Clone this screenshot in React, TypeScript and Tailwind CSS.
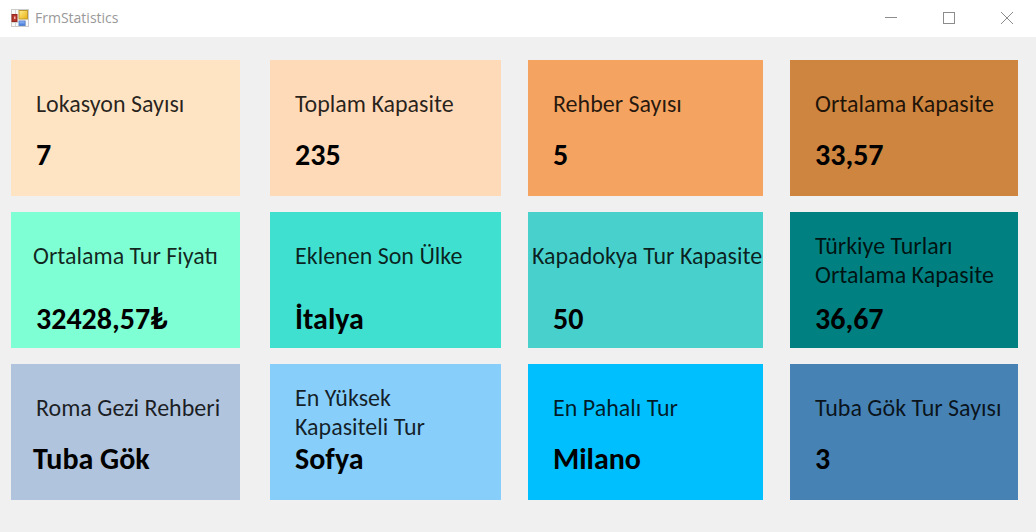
type Stat = {
  label: string;
  value: string;
  color: string;
  twoLines?: boolean;
  labelInset?: string;
  valueInset?: string;
  lowValue?: boolean;
};

const stats: Stat[] = [
  { label: "Lokasyon Sayısı", value: "7", color: "bg-[#ffe4c4]" },
  { label: "Toplam Kapasite", value: "235", color: "bg-[#ffdab9]" },
  { label: "Rehber Sayısı", value: "5", color: "bg-[#f4a460]" },
  { label: "Ortalama Kapasite", value: "33,57", color: "bg-[#cd853f]" },
  { label: "Ortalama Tur Fiyatı", value: "32428,57₺", color: "bg-[#7fffd4]", labelInset: "pl-[22px]", lowValue: true },
  { label: "Eklenen Son Ülke", value: "İtalya", color: "bg-[#40e0d0]", lowValue: true },
  { label: "Kapadokya Tur Kapasitesi", value: "50", color: "bg-[#48d1cc]", labelInset: "pl-1", lowValue: true },
  { label: "Türkiye Turları\nOrtalama Kapasite", value: "36,67", color: "bg-[#008080]", twoLines: true, lowValue: true },
  { label: "Roma Gezi Rehberi", value: "Tuba Gök", color: "bg-[#b0c4de]", valueInset: "pl-[22px]" },
  { label: "En Yüksek\nKapasiteli Tur", value: "Sofya", color: "bg-[#87cefa]", twoLines: true },
  { label: "En Pahalı Tur", value: "Milano", color: "bg-[#00bfff]" },
  { label: "Tuba Gök Tur Sayısı", value: "3", color: "bg-[#4682b4]" },
];

function StatCard({ label, value, color, twoLines, labelInset, valueInset, lowValue }: Stat) {
  return (
    <div
      className={`flex min-h-[136px] min-w-0 flex-col overflow-hidden ${color} ${twoLines ? "pt-[19px]" : "pt-[29px]"} ${lowValue ? "pb-[11px]" : "pb-[23px]"}`}
    >
      <dt className={`whitespace-pre text-[24px] leading-[29px] text-black/85 ${labelInset ?? "pl-[25px]"}`}>{label}</dt>
      <dd className={`mt-auto whitespace-nowrap text-[30px] leading-9 font-bold text-black ${valueInset ?? "pl-[25px]"}`}>{value}</dd>
    </div>
  );
}

function AppIcon() {
  return (
    <svg width="18" height="18" viewBox="0 0 18 18" aria-hidden="true">
      <defs>
        <linearGradient id="gold" x1="0" y1="0" x2="1" y2="1">
          <stop offset="0" stopColor="#ffee8c" />
          <stop offset="1" stopColor="#e8b010" />
        </linearGradient>
        <linearGradient id="blue" x1="0" y1="0" x2="0" y2="1">
          <stop offset="0" stopColor="#9cc4ff" />
          <stop offset="1" stopColor="#3a6fd8" />
        </linearGradient>
      </defs>
      <rect x="0.5" y="0.5" width="17" height="17" fill="#f8f8f8" stroke="#cccccc" />
      <path d="M4.5 1v16M1 13.5h6M14.5 12v5" stroke="#d4d4d4" />
      <rect x="8" y="1.5" width="8.5" height="8.5" fill="url(#gold)" stroke="#c09a30" />
      <rect x="1" y="5.5" width="5" height="7" fill="#b8382c" stroke="#93261e" />
      <rect x="3" y="7.5" width="1.5" height="2.5" fill="#f0b0a8" />
      <rect x="8" y="12" width="6" height="4.5" fill="url(#blue)" stroke="#5c86cc" />
    </svg>
  );
}

const windowButton = "flex h-full w-[58px] items-center justify-center hover:bg-gray-100";

export default function App() {
  return (
    <main className="min-h-screen bg-[#f0f0f0] font-[Calibri,Carlito,Lato,sans-serif]">
      <header className="flex h-[37px] items-center bg-white pb-[2px] pl-[11px]">
        <AppIcon />
        <h1 className="ml-[6px] flex-1 font-['Segoe_UI','Open_Sans',sans-serif] text-[14px] leading-5 text-[#999999]">FrmStatistics</h1>
        <div className="flex h-full items-center">
          <button type="button" aria-label="Minimize" className={windowButton}>
            <svg width="12" height="12" viewBox="0 0 12 12"><path d="M0 5.5h12" stroke="#8c8c8c" /></svg>
          </button>
          <button type="button" aria-label="Maximize" className={windowButton}>
            <svg width="12" height="12" viewBox="0 0 12 12"><rect x="0.5" y="0.5" width="11" height="11" fill="none" stroke="#8c8c8c" /></svg>
          </button>
          <button type="button" aria-label="Close" className={windowButton}>
            <svg width="12" height="12" viewBox="0 0 12 12"><path d="M0 0l12 12M12 0L0 12" stroke="#8c8c8c" /></svg>
          </button>
        </div>
      </header>
      <dl className="grid grid-cols-[232fr_231fr_235fr_228fr] gap-x-[27px] gap-y-4 pt-[23px] pr-[18px] pb-8 pl-[11px] *:nth-[4n+1]:mr-[3px]">
        {stats.map((stat) => (
          <StatCard key={stat.label} {...stat} />
        ))}
      </dl>
    </main>
  );
}
